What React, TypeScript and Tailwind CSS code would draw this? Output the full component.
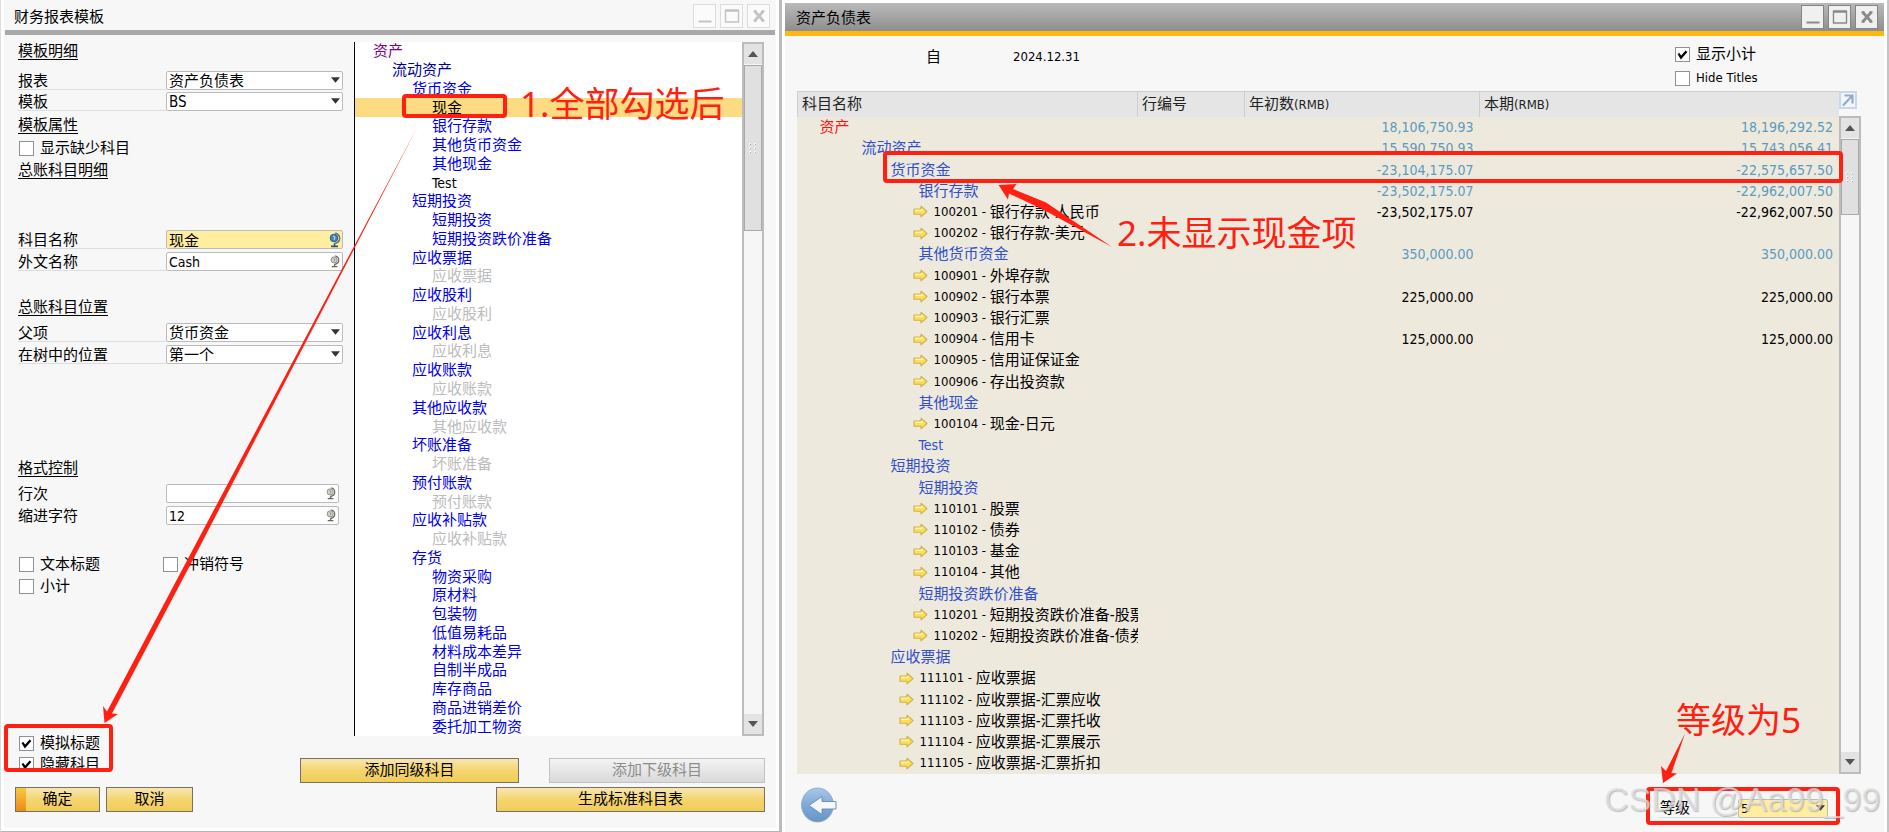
import React from 'react';

const SANS = "font-['DejaVu_Sans_Condensed','Noto_Sans_CJK_SC',sans-serif]";

type TreeItem = { level: number; text: string; tone?: 'muted' | 'selected' | 'plain' };

const tree: TreeItem[] = [
  { level: 0, text: '资产' },
  { level: 1, text: '流动资产' },
  { level: 2, text: '货币资金' },
  { level: 3, text: '现金', tone: 'selected' },
  { level: 3, text: '银行存款' },
  { level: 3, text: '其他货币资金' },
  { level: 3, text: '其他现金' },
  { level: 3, text: 'Test', tone: 'plain' },
  { level: 2, text: '短期投资' },
  { level: 3, text: '短期投资' },
  { level: 3, text: '短期投资跌价准备' },
  { level: 2, text: '应收票据' },
  { level: 3, text: '应收票据', tone: 'muted' },
  { level: 2, text: '应收股利' },
  { level: 3, text: '应收股利', tone: 'muted' },
  { level: 2, text: '应收利息' },
  { level: 3, text: '应收利息', tone: 'muted' },
  { level: 2, text: '应收账款' },
  { level: 3, text: '应收账款', tone: 'muted' },
  { level: 2, text: '其他应收款' },
  { level: 3, text: '其他应收款', tone: 'muted' },
  { level: 2, text: '坏账准备' },
  { level: 3, text: '坏账准备', tone: 'muted' },
  { level: 2, text: '预付账款' },
  { level: 3, text: '预付账款', tone: 'muted' },
  { level: 2, text: '应收补贴款' },
  { level: 3, text: '应收补贴款', tone: 'muted' },
  { level: 2, text: '存货' },
  { level: 3, text: '物资采购' },
  { level: 3, text: '原材料' },
  { level: 3, text: '包装物' },
  { level: 3, text: '低值易耗品' },
  { level: 3, text: '材料成本差异' },
  { level: 3, text: '自制半成品' },
  { level: 3, text: '库存商品' },
  { level: 3, text: '商品进销差价' },
  { level: 3, text: '委托加工物资' },
];

const treeIndent = ['pl-[18px]', 'pl-[37px]', 'pl-[57px]', 'pl-[77px]'];
const treeColor = ['text-[#800080]', 'text-[#000090]', 'text-[#0000f0]', 'text-[#0000f0]'];

type Row = { kind: 'title' | 'account'; level: number; text: string; code?: string; opening?: string; current?: string };

const title = (level: number, text: string, opening?: string, current?: string): Row => ({ kind: 'title', level, text, opening, current });
const account = (level: number, code: string, text: string, opening?: string, current?: string): Row => ({ kind: 'account', level, code, text, opening, current });

const rows: Row[] = [
  title(0, '资产', '18,106,750.93', '18,196,292.52'),
  title(1, '流动资产', '15,590,750.93', '15,743,056.41'),
  title(2, '货币资金', '-23,104,175.07', '-22,575,657.50'),
  title(3, '银行存款', '-23,502,175.07', '-22,962,007.50'),
  account(1, '100201', '银行存款-人民币', '-23,502,175.07', '-22,962,007.50'),
  account(1, '100202', '银行存款-美元'),
  title(3, '其他货币资金', '350,000.00', '350,000.00'),
  account(1, '100901', '外埠存款'),
  account(1, '100902', '银行本票', '225,000.00', '225,000.00'),
  account(1, '100903', '银行汇票'),
  account(1, '100904', '信用卡', '125,000.00', '125,000.00'),
  account(1, '100905', '信用证保证金'),
  account(1, '100906', '存出投资款'),
  title(3, '其他现金'),
  account(1, '100104', '现金-日元'),
  title(3, 'Test'),
  title(2, '短期投资'),
  title(3, '短期投资'),
  account(1, '110101', '股票'),
  account(1, '110102', '债券'),
  account(1, '110103', '基金'),
  account(1, '110104', '其他'),
  title(3, '短期投资跌价准备'),
  account(1, '110201', '短期投资跌价准备-股票'),
  account(1, '110202', '短期投资跌价准备-债券'),
  title(2, '应收票据'),
  account(0, '111101', '应收票据'),
  account(0, '111102', '应收票据-汇票应收'),
  account(0, '111103', '应收票据-汇票托收'),
  account(0, '111104', '应收票据-汇票展示'),
  account(0, '111105', '应收票据-汇票折扣'),
];

const titleIndent = ['pl-[22px] text-[#ff1414]', 'pl-[64px] text-[#2f4fd0]', 'pl-[93px] text-[#2f4fd0]', 'pl-[121px] text-[#2f4fd0]'];
const accountIndent = ['pl-[101px]', 'pl-[115px]'];

function Check({ id, label, checked }: { id: string; label: string; checked?: boolean }) {
  return (
    <div className="flex h-[18px] shrink-0 items-center gap-1.5">
      <span className="relative size-[15px] shrink-0">
        <input id={id} type="checkbox" defaultChecked={checked} className="peer block size-[15px] appearance-none border border-[#8d9298] bg-white" />
        <svg viewBox="0 0 15 15" className="pointer-events-none absolute inset-0 hidden size-[15px] peer-checked:block">
          <path d="M3.5 6.5 L6 10.5 L11.5 4.2" fill="none" stroke="#000" strokeWidth="2.3" />
        </svg>
      </span>
      <label htmlFor={id} className="whitespace-nowrap">{label}</label>
    </div>
  );
}

function Heading({ children, className = '' }: { children: React.ReactNode; className?: string }) {
  return (
    <h3 className={`h-[18px] leading-[18px] ${className}`}>
      <span className="underline decoration-1 underline-offset-[3px]">{children}</span>
    </h3>
  );
}

function Globe({ active }: { active?: boolean }) {
  return (
    <svg viewBox="0 0 12 16" className={`pointer-events-none absolute ${active ? 'right-0.5 top-0.5 h-4 w-3' : 'right-[3px] top-[3px] h-[13px] w-[10px]'}`}>
      <circle cx="5" cy="6" r="3.8" fill={active ? '#3f86c4' : '#d2d2ca'} stroke={active ? '#27567e' : '#77776f'} strokeWidth="0.9" />
      <path d="M6.2 1 C12.5 3 12 10.5 5.5 11.5" fill="none" stroke={active ? '#5d7182' : '#66665f'} strokeWidth="1.4" />
      <path d="M5.5 11.5 V14 M2 14.4 H9" stroke={active ? '#27567e' : '#66665f'} strokeWidth="1.6" />
      <path d="M4 4 L6 5 L5 8" fill="none" stroke={active ? '#c8e2f4' : '#8b8b84'} strokeWidth="1" />
    </svg>
  );
}

function Arrow({ up, className = '' }: { up?: boolean; className?: string }) {
  return (
    <svg viewBox="0 0 10 6" className={className}>
      <path d={up ? 'M0 6 L5 0 L10 6 Z' : 'M0 0 H10 L5 6 Z'} fill="currentColor" />
    </svg>
  );
}

const boxCls = 'block h-[19px] w-full appearance-none rounded-[2px] border border-[#b9bbbd] py-0 pl-0.5 leading-[16px] text-black';

function SelectField({ id, label, value }: { id: string; label: string; value: string }) {
  return (
    <div className="flex h-5 items-start pr-[11px]">
      <label htmlFor={id} className="h-[19px] w-[148px] shrink-0 border-b border-[#d9dee5] leading-[20px]">{label}</label>
      <div className="relative flex-1">
        <select id={id} defaultValue={value} className={`${boxCls} bg-white`}>
          <option>{value}</option>
        </select>
        <Arrow className="pointer-events-none absolute right-[3px] top-[6px] h-[6px] w-[9px] text-[#30343a]" />
      </div>
    </div>
  );
}

function TextField({ id, label, value, active, short }: { id: string; label: string; value: string; active?: boolean; short?: boolean }) {
  return (
    <div className={`flex h-5 items-start ${short ? 'pr-[15px]' : 'pr-[11px]'}`}>
      <label htmlFor={id} className={`h-[19px] w-[148px] shrink-0 leading-[20px] ${short ? '' : 'border-b border-[#d9dee5]'}`}>{label}</label>
      <div className="relative flex-1">
        <input id={id} type="text" defaultValue={value} className={`${boxCls} ${active ? 'bg-[#ffee9f]' : 'bg-white text-[14px]'}`} />
        <Globe active={active} />
      </div>
    </div>
  );
}

function Button({ children, className = '', disabled, primary }: { children: React.ReactNode; className?: string; disabled?: boolean; primary?: boolean }) {
  return (
    <button
      type="button"
      disabled={disabled}
      className={`flex h-[25px] items-stretch border ${
        disabled
          ? 'border-[#c2c2c2] bg-linear-to-b from-[#f3f3f3] to-[#d9d9d9] text-[#8c8c8c]'
          : 'border-[#74726a] bg-linear-to-b from-[#f8e6b0] via-[#f5d56f] to-[#f1cc56] text-black'
      } ${className}`}
    >
      {primary && <span className="w-[10px] bg-linear-to-b from-[#f9c83e] to-[#ee8a12]" />}
      <span className={`flex-1 text-center leading-[22px] ${primary ? 'pr-2.5' : ''}`}>{children}</span>
    </button>
  );
}

function Scrollbar({ thumb }: { thumb: string }) {
  return (
    <div className="flex w-[22px] shrink-0 flex-col border-2 border-[#bcbcbc] bg-[#f6f6f6]">
      <button type="button" aria-label="向上滚动" className="flex h-5 shrink-0 items-center justify-center bg-[#e3e3e3] text-[#555]">
        <Arrow up className="h-[6px] w-[10px]" />
      </button>
      <div className={`mt-px flex shrink-0 items-center justify-center border border-[#a9a9a9] bg-[#e0e0e0] ${thumb}`}>
        <svg viewBox="0 0 8 12" className="h-3 w-2">
          {[0, 4, 8].map((y) => (
            <g key={y} fill="#f7f7f7">
              <rect x="0" y={y + 1} width="2" height="2" /><rect x="5" y={y + 1} width="2" height="2" />
              <rect x="1" y={y + 2} width="1" height="1" fill="#aaa" /><rect x="6" y={y + 2} width="1" height="1" fill="#aaa" />
            </g>
          ))}
        </svg>
      </div>
      <button type="button" aria-label="向下滚动" className="mt-auto flex h-5 shrink-0 items-center justify-center bg-[#e3e3e3] text-[#555]">
        <Arrow className="h-[6px] w-[10px]" />
      </button>
    </div>
  );
}

function WindowButtons({ faded }: { faded?: boolean }) {
  const cls = `flex h-[24px] w-[23px] items-center justify-center border ${faded ? 'border-[#dcdcdc] bg-[#fbfbfb] text-[#c3c3c3]' : 'border-[#858585] bg-[#f0f0f0] text-[#8a8a8a]'}`;
  return (
    <div className="flex gap-1">
      <button type="button" aria-label="最小化" className={cls}>
        <svg viewBox="0 0 16 16" className="size-4"><path d="M1.5 13.5 H14.5" stroke="currentColor" strokeWidth="2" /></svg>
      </button>
      <button type="button" aria-label="最大化" className={cls}>
        <svg viewBox="0 0 16 16" className="size-4"><path d="M1.5 2.5 H14.5 V14 H1.5 Z" fill="none" stroke="currentColor" strokeWidth="1.4" /><path d="M1 2.5 H15" stroke="currentColor" strokeWidth="2.4" /></svg>
      </button>
      <button type="button" aria-label="关闭" className={cls}>
        <svg viewBox="0 0 16 16" className="size-4"><path d="M3.5 3 L12.5 13 M12.5 3 L3.5 13" stroke="currentColor" strokeWidth="2.8" /><path d="M2.5 3 H5.5 M10.5 3 H13.5 M2.5 13 H5.5 M10.5 13 H13.5" stroke="currentColor" strokeWidth="1.5" /></svg>
      </button>
    </div>
  );
}

function RowArrow() {
  return (
    <svg viewBox="0 0 15 13" className="h-[13px] w-[15px] shrink-0">
      <path d="M1 4 H8 V1.2 L14 6.5 L8 11.8 V9.2 H1 Z" fill="#fbdf55" stroke="#d3b04c" strokeWidth="1.1" strokeLinejoin="round" />
      <path d="M2.2 5.4 H9 V4" fill="none" stroke="#fff8c8" strokeWidth="1.2" />
    </svg>
  );
}

function TemplateWindow() {
  return (
    <section className="flex min-w-0 grow-[772] basis-0 flex-col border-b border-l border-r-[3px] border-b-[#b5b5b5] border-l-[#dedede] border-r-[#bbb] bg-white px-[3px] pb-[3px]">
      <div className="flex min-h-0 flex-1 flex-col bg-[#f7f7f7]">
        <header className="mx-px flex h-[35px] shrink-0 items-start justify-between border-b-[5px] border-[#a9a9a9] pl-[9px] pr-[5px] pt-1">
          <h2 className="leading-[26px]">财务报表模板</h2>
          <WindowButtons faded />
        </header>
        <div className="mt-[7px] flex min-h-0 flex-1 pr-3">
          <form className="flex w-[350px] shrink-0 flex-col pl-[14px]">
            <Heading>模板明细</Heading>
            <div className="mt-[11px] flex flex-col gap-[1px]">
              <SelectField id="report" label="报表" value="资产负债表" />
              <SelectField id="template" label="模板" value="BS" />
            </div>
            <Heading className="mt-1">模板属性</Heading>
            <div className="mb-1 mt-[5px] pl-[1px]"><Check id="missing" label="显示缺少科目" /></div>
            <Heading>总账科目明细</Heading>
            <div className="mt-[51px] flex flex-col gap-0.5">
              <TextField id="name" label="科目名称" value="现金" active />
              <TextField id="foreign" label="外文名称" value="Cash" />
            </div>
            <Heading className="mt-[26px]">总账科目位置</Heading>
            <div className="mt-[7px] flex flex-col gap-0.5">
              <SelectField id="parent" label="父项" value="货币资金" />
              <SelectField id="position" label="在树中的位置" value="第一个" />
            </div>
            <Heading className="mt-[94px]">格式控制</Heading>
            <div className="mt-[7px] flex flex-col gap-0.5">
              <TextField id="line" label="行次" value="" short />
              <TextField id="indent" label="缩进字符" value="12" short />
            </div>
            <div className="mt-[29px] grid grid-cols-[144px_1fr] gap-y-1 pl-[1px]">
              <Check id="text-title" label="文本标题" />
              <Check id="reverse" label="冲销符号" />
              <Check id="subtotal" label="小计" />
            </div>
          </form>
          <ul className="grid min-w-0 flex-1 auto-rows-fr border-l border-black bg-white">
            {tree.map((item, i) => (
              <li
                key={i}
                className={`flex min-h-0 items-center leading-[18px] ${treeIndent[item.level]} ${
                  item.tone === 'selected'
                    ? 'bg-[#fcdb82] text-black'
                    : item.tone === 'plain'
                      ? 'text-[14px] text-black'
                      : item.tone === 'muted'
                        ? 'text-[#bcbcbc]'
                        : treeColor[item.level]
                }`}
              >
                {item.text}
              </li>
            ))}
          </ul>
          <Scrollbar thumb="h-[166px]" />
        </div>
        <div className="flex items-start justify-between pl-[15px] pr-[11px]">
          <div className="-mt-0.5 flex h-[38px] flex-col gap-[3px] overflow-hidden">
            <Check id="simulate" label="模拟标题" checked />
            <Check id="hide" label="隐藏科目" checked />
          </div>
          <div className="mt-[22px] flex gap-[30px]">
            <Button className="w-[219px]">添加同级科目</Button>
            <Button className="w-[216px]" disabled>添加下级科目</Button>
          </div>
        </div>
        <div className="mb-4 mt-1 flex pl-[11px] pr-[11px]">
          <Button className="w-[85px]" primary>确定</Button>
          <Button className="ml-[6px] w-[87px]">取消</Button>
          <Button className="ml-auto w-[269px]">生成标准科目表</Button>
        </div>
      </div>
    </section>
  );
}

function BalanceWindow() {
  return (
    <section className="flex min-w-0 grow-[1099] basis-0 flex-col border-r-2 border-[#c4c4c4] bg-white px-[3px] pt-[3px]">
      <header className="flex h-[33px] shrink-0 items-start justify-between border-b-[5px] border-[#fdb813] bg-linear-to-b from-[#bababa] to-[#8e8e8e] pl-[11px] pr-[6px] pt-[2px]">
        <h2 className="leading-[26px]">资产负债表</h2>
        <WindowButtons />
      </header>
      <div className="flex min-h-0 flex-1 flex-col bg-[#f7f7f7] pl-3">
        <div className="flex h-[55px] shrink-0 items-start justify-between">
          <p className="flex pl-[129px] pt-[10px] leading-[22px]">
            <span className="w-[87px]">自</span>
            <span className="text-[13px]">2024.12.31</span>
          </p>
          <div className="flex w-[209px] flex-col gap-[6px] pt-[9px]">
            <Check id="show-subtotal" label="显示小计" checked />
            <div className="text-[13px]"><Check id="hide-titles" label="Hide Titles" /></div>
          </div>
        </div>
        <div className="flex min-h-0 flex-1 pr-[23px]">
          <div className="min-w-0 flex-1">
            <table className="h-full w-full table-fixed border-collapse bg-[#eee9dd]">
              <colgroup>
                <col className="w-[340px]" />
                <col className="w-[107px]" />
                <col className="w-[235px]" />
                <col />
              </colgroup>
              <thead>
                <tr className="h-[25px] bg-[#e5e5e5] text-left leading-[20px] text-[#222]">
                  <th className="border-l border-t border-solid border-[#cfcfcf] px-1 py-0 font-normal">科目名称</th>
                  <th className="border-l border-t border-solid border-[#cfcfcf] px-1 py-0 font-normal">行编号</th>
                  <th className="border-l border-t border-solid border-[#cfcfcf] px-1 py-0 font-normal">年初数<span className="text-[13px]">(RMB)</span></th>
                  <th className="border-l border-t border-solid border-[#cfcfcf] px-1 py-0 font-normal">本期<span className="text-[13px]">(RMB)</span></th>
                </tr>
              </thead>
              <tbody>
                {rows.map((r, i) => (
                  <tr key={i} className="leading-[20px]">
                    <td className="overflow-hidden p-0">
                      {r.kind === 'title' ? (
                        <span className={`block whitespace-nowrap ${titleIndent[r.level]} ${r.text === 'Test' ? 'text-[14px]' : ''}`}>{r.text}</span>
                      ) : (
                        <span className={`flex items-center whitespace-nowrap ${accountIndent[r.level]}`}>
                          <RowArrow />
                          <span className="ml-[6px] whitespace-pre text-[13px]">{r.code} - </span>
                          <span>{r.text}</span>
                        </span>
                      )}
                    </td>
                    <td className="p-0" />
                    <td className={`py-0 pl-0 pr-[6px] text-right text-[14px] ${r.kind === 'title' ? 'text-[#5b9bbd]' : ''}`}>{r.opening}</td>
                    <td className={`py-0 pl-0 pr-[6px] text-right text-[14px] ${r.kind === 'title' ? 'text-[#5b9bbd]' : ''}`}>{r.current}</td>
                  </tr>
                ))}
              </tbody>
            </table>
          </div>
          <div className="flex w-[22px] flex-col">
            <button type="button" aria-label="展开表格" className="mb-[7px] size-[18px] shrink-0 border-2 border-[#c5d8ec] bg-[#f2f6fb]">
              <svg viewBox="0 0 14 14" className="size-[14px]"><path d="M3.5 2.5 H11.5 V10.5 M11 3 L2 12.5" fill="none" stroke="#92a9cc" strokeWidth="2.2" /></svg>
            </button>
            <div className="flex min-h-0 flex-1"><Scrollbar thumb="h-[76px]" /></div>
          </div>
        </div>
        <footer className="flex h-[58px] shrink-0 items-start justify-between pr-[56px]">
          <button type="button" aria-label="返回" className="ml-1 mt-[13px]">
            <svg viewBox="0 0 36 36" className="size-9">
              <defs>
                <linearGradient id="back" x1="0" y1="0" x2="0" y2="1">
                  <stop offset="0" stopColor="#a9c7e8" />
                  <stop offset="0.5" stopColor="#7fa9d8" />
                  <stop offset="1" stopColor="#6795c4" />
                </linearGradient>
              </defs>
              <ellipse cx="16.5" cy="18" rx="16" ry="17" fill="url(#back)" stroke="#86a5c4" strokeWidth="0.8" />
              <path d="M8 18.5 L21 9.5 V14.5 H35 V22 H21 V27.5 Z" fill="#f5f7f9" stroke="#5f8bb8" strokeWidth="0.9" />
            </svg>
          </button>
          <div className="mt-[25px] flex items-start">
            <label htmlFor="level" className="h-[19px] w-20 border-b border-[#d9dee5] pl-0.5 leading-[19px]">等级</label>
            <div className="relative w-[90px]">
              <select id="level" defaultValue="5" className={`${boxCls} bg-[#ffee9f] text-[13px]`}>
                <option>5</option>
              </select>
              <Arrow className="pointer-events-none absolute right-[3px] top-[6px] h-[6px] w-[9px] text-[#30343a]" />
            </div>
          </div>
        </footer>
      </div>
    </section>
  );
}

/* Mark-up laid over the two windows: frames, arrows, notes and the watermark. */
function Annotations() {
  const frame = 'absolute rounded-[4px] border-4 border-[#ff2012]';
  const note = "absolute whitespace-nowrap font-['Noto_Sans','Noto_Sans_CJK_SC',sans-serif] text-[35px] leading-[40px] text-[#ff2012]";
  return (
    <div className="pointer-events-none absolute inset-0 overflow-hidden">
      <div className={`${frame} left-[402px] top-[94px] h-[24px] w-[105px]`} />
      <div className={`${frame} left-[4px] top-[724px] h-[48px] w-[109px]`} />
      <div className={`${frame} left-[883px] top-[151px] h-[32px] w-[960px]`} />
      <div className={`${frame} left-[1646px] top-[787px] h-[38px] w-[194px]`} />
      <svg className="absolute left-0 top-0 h-[832px] w-[1889px]" viewBox="0 0 1889 832" fill="#ff2012">
        <path d="M418 126 L335 282 L191.5 552 L107 711.5 L103 706 L104.5 723 L118 714 L112 713.5 L197 552 L337 282 Z" />
        <path d="M1112 247 L1046 202.5 L1013 189 L1016.5 184 L998.6 185 L1008 199.5 L1009 193.5 L1042 209 Z" />
        <path d="M1685 733.5 L1666 771 L1661 766 L1663 783 L1677 773.5 L1671.5 773 Z" />
      </svg>
      <p className={`${note} left-[520px] top-[84px]`}>1.全部勾选后</p>
      <p className={`${note} left-[1117px] top-[213px]`}>2.未显示现金项</p>
      <p className={`${note} left-[1676px] top-[700px]`}>等级为5</p>
      <p className="absolute left-[1604px] top-[779px] whitespace-nowrap font-['Liberation_Sans',sans-serif] text-[34px] leading-[40px] text-[#e4e4e4]/70 [text-shadow:1px_1px_1px_#8888]">CSDN @Aa99_99</p>
    </div>
  );
}

export default function App() {
  return (
    <main className={`relative flex h-screen min-h-[820px] w-full overflow-hidden bg-white text-[15px] text-black ${SANS}`}>
      <TemplateWindow />
      <BalanceWindow />
      <Annotations />
    </main>
  );
}
